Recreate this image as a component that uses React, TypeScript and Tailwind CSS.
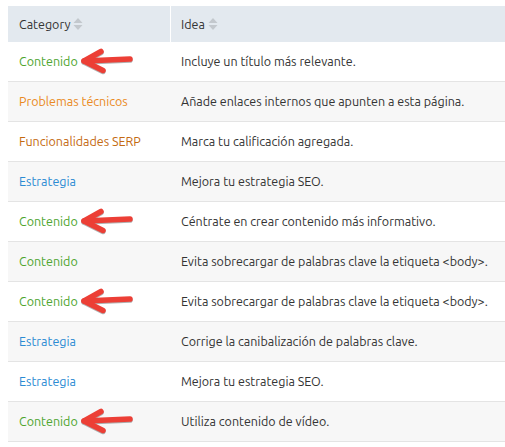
import React from "react";

type Row = { category: string; color: string; idea: string; arrow?: boolean };

const rows: Row[] = [
  { category: "Contenido", color: "text-[#4ea52f]", idea: "Incluye un título más relevante.", arrow: true },
  { category: "Problemas técnicos", color: "text-[#ea8a22]", idea: "Añade enlaces internos que apunten a esta página." },
  { category: "Funcionalidades SERP", color: "text-[#c46a10]", idea: "Marca tu calificación agregada." },
  { category: "Estrategia", color: "text-[#2b8bd3]", idea: "Mejora tu estrategia SEO." },
  { category: "Contenido", color: "text-[#4ea52f]", idea: "Céntrate en crear contenido más informativo.", arrow: true },
  { category: "Contenido", color: "text-[#4ea52f]", idea: "Evita sobrecargar de palabras clave la etiqueta <body>." },
  { category: "Contenido", color: "text-[#4ea52f]", idea: "Evita sobrecargar de palabras clave la etiqueta <body>.", arrow: true },
  { category: "Estrategia", color: "text-[#2b8bd3]", idea: "Corrige la canibalización de palabras clave." },
  { category: "Estrategia", color: "text-[#2b8bd3]", idea: "Mejora tu estrategia SEO." },
  { category: "Contenido", color: "text-[#4ea52f]", idea: "Utiliza contenido de vídeo.", arrow: true },
];

function SortIcon() {
  return (
    <svg width="10" height="14" viewBox="0 0 10 14" className="ml-[3px]">
      <path d="M5 1 L9.5 6 H0.5 Z" fill="#c3c8cd" />
      <path d="M5 13 L9.5 8 H0.5 Z" fill="#c3c8cd" />
    </svg>
  );
}

function Arrow() {
  return (
    <svg width="56" height="28" viewBox="0 0 56 28" className="ml-[2px] -my-2 -translate-y-[1px]">
      <g
        stroke="#ec3f36"
        strokeWidth="5.5"
        strokeLinecap="round"
        strokeLinejoin="round"
        fill="none"
        style={{ filter: "drop-shadow(0.5px 1px 0.6px rgba(0,0,0,0.3))" }}
      >
        <path d="M4 14 L50 12" />
        <path d="M21 4.5 L4 14 L23 23.5" />
      </g>
    </svg>
  );
}

export default function App() {
  return (
    <div className="w-[505px] h-[447px] bg-white overflow-hidden pt-[6px] pl-[8px] font-['Ubuntu','Open_Sans',sans-serif] text-[12.5px] text-[#333]">
      <div className="w-[497px]">
        <div className="flex h-[36px] bg-[#e3e9ef]">
          <div className="w-[163px] shrink-0 flex items-center pl-[11px] border-r border-white">
            Category
            <SortIcon />
          </div>
          <div className="flex-1 flex items-center pl-[10px]">
            Idea
            <SortIcon />
          </div>
        </div>
        {rows.map((r, i) => (
          <div
            key={i}
            className={`flex h-[40px] border-b border-[#e4e4e4] ${i % 2 === 1 ? "bg-[#f7f7f7]" : "bg-white"}`}
          >
            <div className={`w-[163px] shrink-0 flex items-center pl-[11px] ${r.color}`}>
              {r.category}
              {r.arrow && <Arrow />}
            </div>
            <div className="flex-1 flex items-center pl-[10px] whitespace-nowrap">{r.idea}</div>
          </div>
        ))}
      </div>
    </div>
  );
}
